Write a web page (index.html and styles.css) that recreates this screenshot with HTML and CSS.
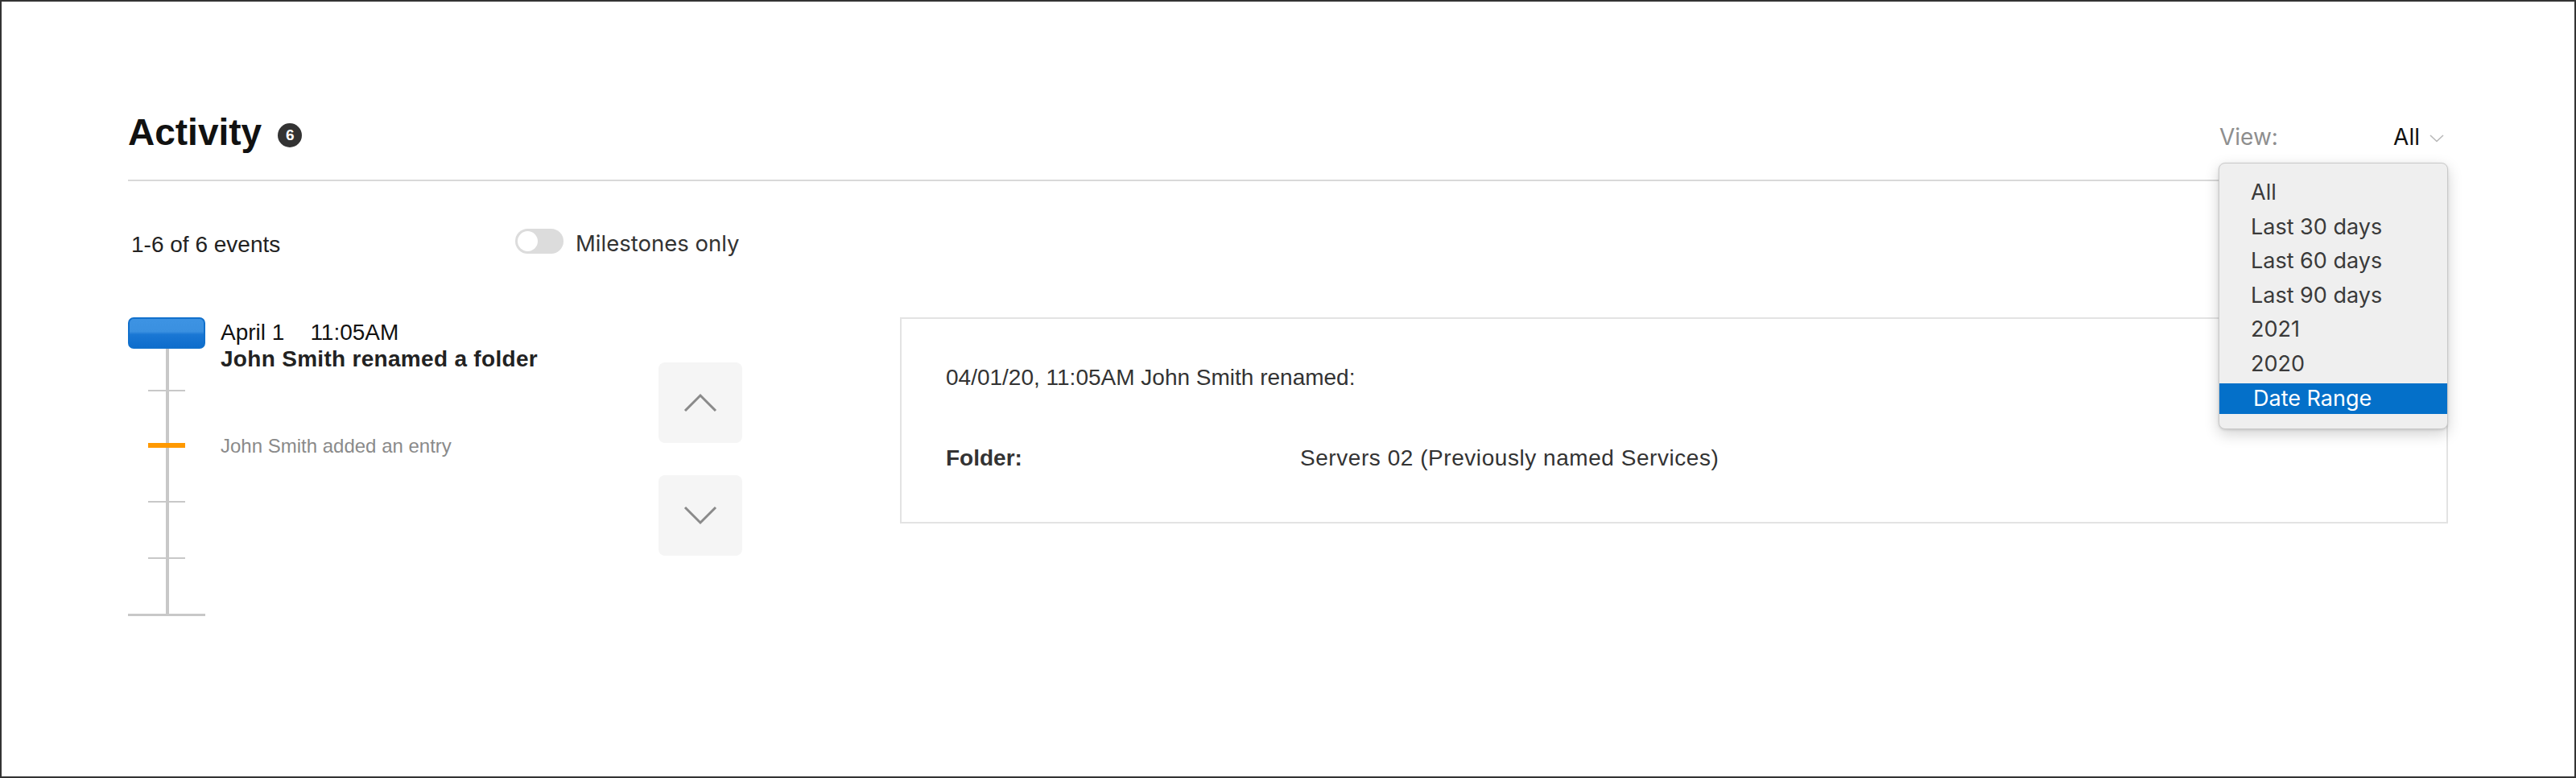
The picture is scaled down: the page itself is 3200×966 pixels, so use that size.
FILE: index.html
```html
<!DOCTYPE html>
<html lang="en">
<head>
<meta charset="utf-8">
<title>Activity</title>
<link rel="stylesheet" href="styles.css">
</head>
<body>
<div class="frame">
  <div class="page">
    <header class="header">
      <h1 class="title">Activity</h1>
      <span class="badge">6</span>
      <div class="view-select">
        <span class="view-label">View:</span>
        <span class="view-value">All
          <svg class="view-chevron" width="18" height="10" viewBox="0 0 18 10"><path d="M1 1 L9 8.5 L17 1" fill="none" stroke="#b8b8b8" stroke-width="1.6"/></svg>
        </span>
        <ul class="menu">
          <li class="menu-item">All</li>
          <li class="menu-item">Last 30 days</li>
          <li class="menu-item">Last 60 days</li>
          <li class="menu-item">Last 90 days</li>
          <li class="menu-item">2021</li>
          <li class="menu-item">2020</li>
          <li class="menu-item menu-item-active">Date Range</li>
        </ul>
      </div>
    </header>

    <div class="toolbar">
      <span class="count">1-6 of 6 events</span>
      <span class="toggle"><span class="knob"></span></span>
      <span class="toggle-label">Milestones only</span>
    </div>

    <main class="main">
      <div class="timeline">
        <div class="marker"></div>
        <div class="track">
          <span class="tick tick-1"></span>
          <span class="tick tick-milestone"></span>
          <span class="tick tick-3"></span>
          <span class="tick tick-4"></span>
          <span class="track-base"></span>
        </div>
      </div>

      <div class="events">
        <div class="event event-main">
          <div class="event-date">April 1<span class="event-time">11:05AM</span></div>
          <div class="event-title">John Smith renamed a folder</div>
        </div>
        <div class="event event-minor">John Smith added an entry</div>
      </div>

      <div class="nav">
        <button class="nav-btn" aria-label="Previous">
          <svg width="42" height="24" viewBox="0 0 42 24"><path d="M2 22 L21 3 L40 22" fill="none" stroke="#8a8a8a" stroke-width="3"/></svg>
        </button>
        <button class="nav-btn" aria-label="Next">
          <svg width="42" height="24" viewBox="0 0 42 24"><path d="M2 2 L21 21 L40 2" fill="none" stroke="#8a8a8a" stroke-width="3"/></svg>
        </button>
      </div>

      <section class="card">
        <div class="card-head">04/01/20, 11:05AM John Smith renamed:</div>
        <div class="card-row">
          <span class="card-label">Folder:</span>
          <span class="card-value">Servers 02 (Previously named Services)</span>
        </div>
      </section>
    </main>
  </div>
</div>
</body>
</html>
```

FILE: styles.css
```css
* { box-sizing: border-box; }

html, body {
  margin: 0;
  padding: 0;
  background: #ffffff;
}

body {
  font-family: "Liberation Sans", Arial, sans-serif;
  color: #222;
}

.frame {
  width: 3200px;
  height: 966px;
  border: 2px solid #333333;
  overflow: hidden;
}

.page {
  padding: 139px 157px 0 157px;
}

/* Header */
.header {
  display: flex;
  align-items: flex-start;
  padding-bottom: 36px;
  border-bottom: 2px solid #d9d9d9;
}

.title {
  margin: 0;
  font-size: 46px;
  line-height: 46px;
  font-weight: 700;
  color: #111;
}

.badge {
  margin-left: 20px;
  margin-top: 12px;
  width: 30px;
  height: 30px;
  border-radius: 50%;
  background: #333;
  color: #fff;
  font-weight: 700;
  font-size: 19px;
  display: flex;
  align-items: center;
  justify-content: center;
}

.view-select {
  position: relative;
  margin-left: auto;
  margin-top: 15px;
  width: 285px;
  display: flex;
  justify-content: space-between;
  align-items: center;
  padding: 0 5px 0 1px;
  font-family: Inter, "Liberation Sans", sans-serif;
  font-size: 28px;
  line-height: 28px;
}

.view-label { color: #8e8e8e; }

.view-value {
  display: flex;
  align-items: center;
  color: #111;
}

.view-chevron {
  margin-left: 12px;
  margin-top: 4px;
}

.menu {
  position: absolute;
  top: 46px;
  left: 0;
  width: 285px;
  margin: 0;
  padding: 15px 0 18px 0;
  list-style: none;
  background: #efefef;
  border: 1px solid #c9c9c9;
  border-radius: 8px;
  box-shadow: 0 6px 18px rgba(0, 0, 0, 0.18), 0 1px 3px rgba(0, 0, 0, 0.12);
  z-index: 10;
  font-size: 27px;
  color: #3a3a3a;
}

.menu-item {
  height: 42.5px;
  line-height: 42.5px;
  padding-left: 39px;
}

.menu-item-active {
  margin-top: 3px;
  height: 38px;
  line-height: 38px;
  padding-left: 42px;
  background: #0470c9;
  color: #fff;
}

/* Toolbar */
.toolbar {
  display: flex;
  align-items: flex-start;
  margin-top: 59px;
}

.count {
  margin-left: 4px;
  margin-top: 6px;
  width: 477px;
  font-size: 28px;
  line-height: 28px;
  color: #222;
}

.toggle {
  position: relative;
  width: 60px;
  height: 31px;
  border-radius: 16px;
  background: #dcdcdc;
}

.knob {
  position: absolute;
  left: 3px;
  top: 3px;
  width: 25px;
  height: 25px;
  border-radius: 50%;
  background: #fff;
}

.toggle-label {
  margin-left: 15px;
  margin-top: 4px;
  font-family: Inter, "Liberation Sans", sans-serif;
  font-size: 27.5px;
  line-height: 28px;
  color: #333;
}

/* Main */
.main {
  display: flex;
  align-items: flex-start;
  margin-top: 76px;
}

.timeline {
  flex: none;
  width: 96px;
}

.marker {
  height: 39px;
  border: 2px solid #1170cc;
  border-radius: 7px;
  background: linear-gradient(#3d93e3 0%, #3a90e0 45%, #1a77d4 55%, #0e6dcc 100%);
}

.track {
  position: relative;
  padding-top: 51px;
}

.track::before {
  content: "";
  position: absolute;
  left: 47px;
  top: 0;
  bottom: 0;
  width: 4px;
  background: #c8c8c8;
}

.tick {
  position: relative;
  display: block;
  margin-left: 25px;
  width: 46px;
  height: 2px;
  background: #c8c8c8;
}

.tick-milestone {
  margin-top: 64px;
  height: 6px;
  background: #ff9900;
}

.tick-3 { margin-top: 66px; }
.tick-4 { margin-top: 68px; }

.track-base {
  position: relative;
  display: block;
  margin-top: 68px;
  width: 96px;
  height: 3px;
  background: #c8c8c8;
}

.events {
  flex: none;
  width: 544px;
  margin-left: 19px;
}

.event-main {
  margin-top: 2px;
  font-size: 28px;
  line-height: 33px;
}

.event-date { color: #111; }

.event-time { margin-left: 32px; }

.event-title {
  font-weight: 700;
  color: #222;
  letter-spacing: 0.3px;
}

.event-minor {
  margin-top: 80px;
  font-size: 24px;
  line-height: 24px;
  color: #8a8a8a;
}

.nav {
  flex: none;
  width: 104px;
  margin-top: 56px;
  display: flex;
  flex-direction: column;
  gap: 40px;
}

.nav-btn {
  width: 104px;
  height: 100px;
  border: 0;
  padding: 0;
  border-radius: 8px;
  background: #f5f5f5;
  display: flex;
  align-items: center;
  justify-content: center;
}

.card {
  flex: 1;
  margin-left: 196px;
  border: 2px solid #e3e3e3;
  padding: 59px 55px 65px 55px;
  font-size: 28px;
  line-height: 28px;
  color: #333;
}

.card-row {
  display: flex;
  margin-top: 72px;
}

.card-label {
  width: 440px;
  font-weight: 700;
}

.card-value {
  letter-spacing: 0.55px;
}
```
